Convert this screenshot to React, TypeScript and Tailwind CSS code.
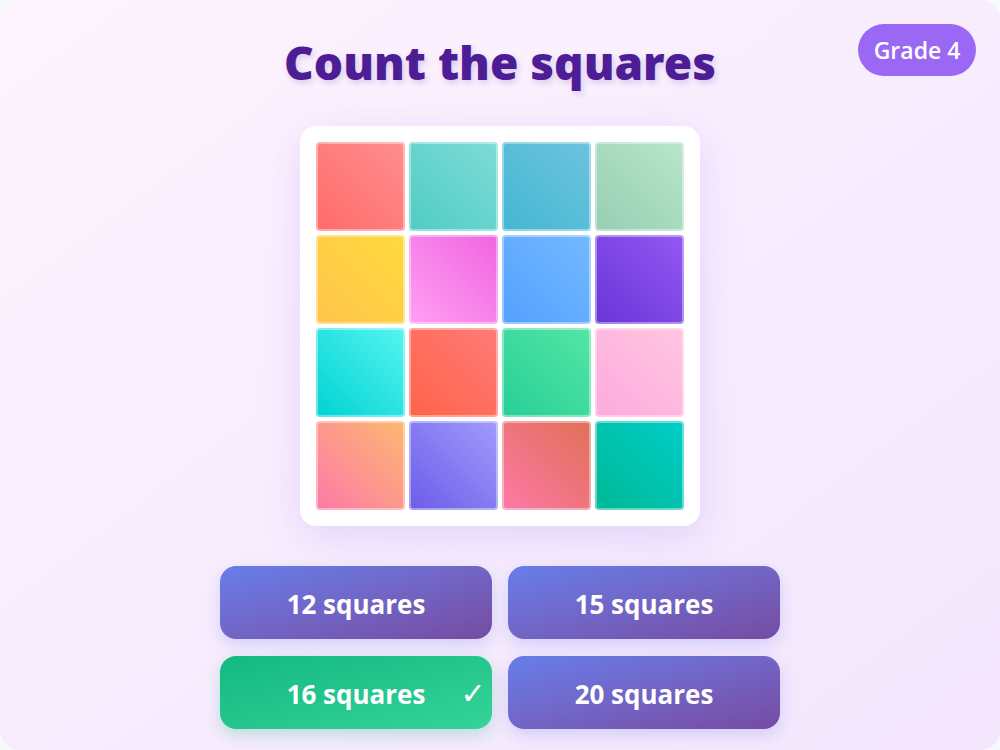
import React from "react";

const cells: [string, string][] = [
  ["#ff6b6b", "#ff8e8e"],
  ["#4ecdc4", "#7fdbd8"],
  ["#45b7d1", "#6cc3e0"],
  ["#96ceb4", "#b9e6c9"],
  ["#ffc54d", "#ffd93d"],
  ["#ffa0f3", "#f064e0"],
  ["#54a0ff", "#74b9ff"],
  ["#6a35d8", "#9258f2"],
  ["#00d2d3", "#55f5f0"],
  ["#ff6348", "#ff7b78"],
  ["#26cf97", "#55e6a5"],
  ["#fdaade", "#ffc6e0"],
  ["#fd79a8", "#fdb870"],
  ["#6c5ce7", "#a29bfe"],
  ["#fd79a8", "#e17055"],
  ["#00b894", "#00cec9"],
];

const answers = [
  { label: "12 squares", correct: false },
  { label: "15 squares", correct: false },
  { label: "16 squares", correct: true },
  { label: "20 squares", correct: false },
];

export default function App() {
  return (
    <div className="w-[1000px] h-[750px] bg-[#f8f9fc] overflow-hidden" style={{ fontFamily: '"Open Sans", "Noto Sans", sans-serif' }}>
      <div className="relative w-full h-full rounded-[20px] bg-gradient-to-br from-[#fdf4fe] to-[#f3e6fd] flex flex-col items-center">
        <div className="absolute top-[24px] right-[24px] h-[52px] w-[118px] rounded-full bg-[#9a68f5] flex items-center justify-center text-white text-[23px] font-semibold">
          Grade 4
        </div>
        <h1
          className="mt-[30px] h-[64px] flex items-center text-[46px] font-black text-[#4c1d95] leading-none"
          style={{ fontFamily: '"Noto Sans", "Open Sans", sans-serif', textShadow: "2px 3px 6px rgba(76,29,149,0.18)" }}
        >
          Count the squares
        </h1>
        <div className="mt-[32px] w-[400px] h-[400px] bg-white rounded-[16px] p-[16px] shadow-[0_10px_40px_rgba(139,92,246,0.18)] grid grid-cols-4 grid-rows-4 gap-[4px]">
          {cells.map(([a, b], i) => (
            <div
              key={i}
              className="rounded-[4px] border-2 border-white/40"
              style={{ backgroundImage: `linear-gradient(45deg, ${a}, ${b})`, backgroundOrigin: "border-box" }}
            />
          ))}
        </div>
        <div className="mt-[40px] grid grid-cols-[272px_272px] gap-x-[16px] gap-y-[17px]">
          {answers.map((ans) => (
            <div
              key={ans.label}
              className={
                "relative h-[73px] pt-[3px] rounded-[16px] flex items-center justify-center text-white text-[26px] font-bold " +
                (ans.correct
                  ? "bg-gradient-to-br from-[#10b981] to-[#34d399] shadow-[0_6px_16px_rgba(16,185,129,0.25)]"
                  : "bg-gradient-to-br from-[#667eea] to-[#764ba2] shadow-[0_6px_16px_rgba(102,126,234,0.25)]")
              }
            >
              {ans.label}
              {ans.correct && (
                <span
                  className="absolute right-[4px] top-1/2 -translate-y-1/2 w-[30px] text-center text-[30px] font-normal"
                  style={{ fontFamily: '"DejaVu Sans", sans-serif' }}
                >
                  ✓
                </span>
              )}
            </div>
          ))}
        </div>
      </div>
    </div>
  );
}
